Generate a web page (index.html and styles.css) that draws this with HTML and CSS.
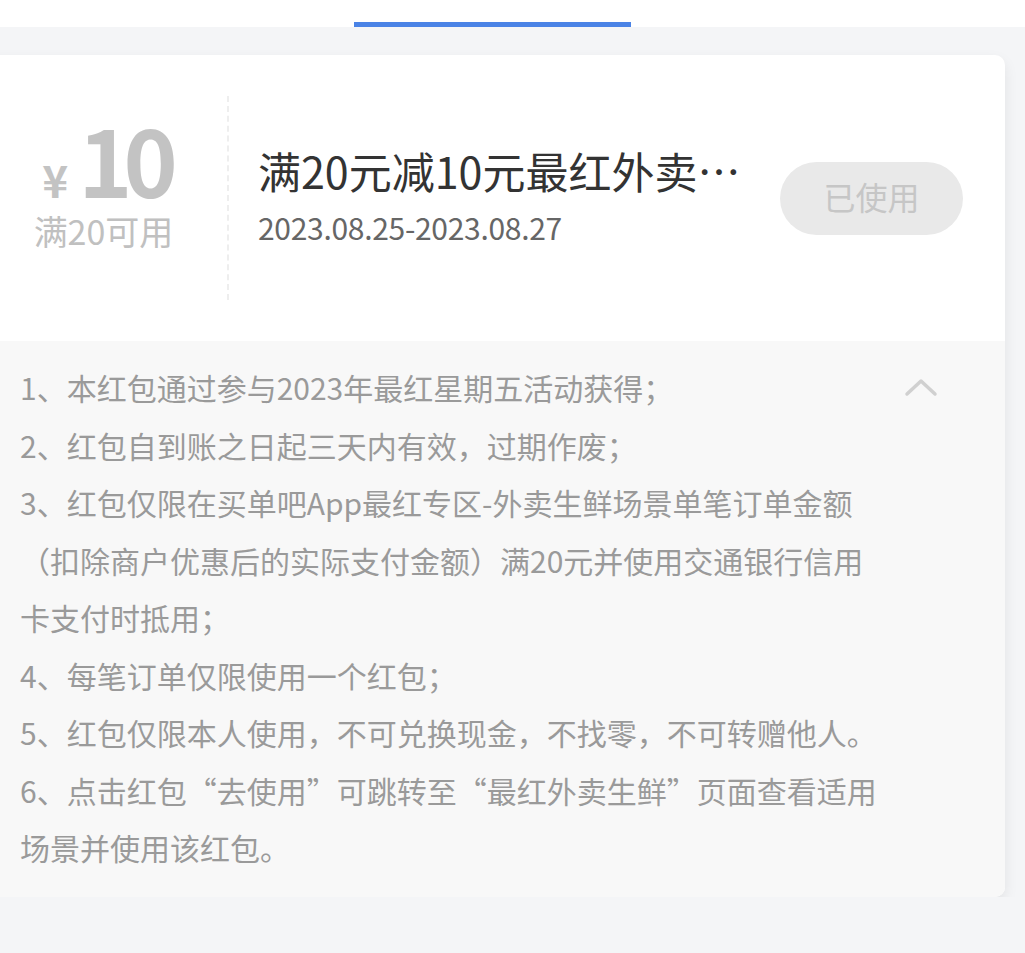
FILE: index.html
```html
<!DOCTYPE html>
<html lang="zh-CN">
<head>
  <meta charset="UTF-8" />
  <title>红包详情</title>
  <link rel="stylesheet" href="styles.css">
</head>
<body>

  <div class="tabbar">
    <div class="tab-line"></div>
  </div>

  <div class="page">
    <div class="coupon">
      <div class="coupon-top">
        <div class="amount">
          <div class="amount-num"><span class="yen">¥</span><span class="num">10</span></div>
          <div class="amount-cond">满20可用</div>
        </div>
        <div class="divider"></div>
        <div class="info">
          <div class="title">满20元减10元最红外卖生鲜红包</div>
          <div class="date">2023.08.25-2023.08.27</div>
        </div>
        <div class="btn-used">已使用</div>
      </div>

      <div class="rules">
        <div class="rules-text">
          <p>1、本红包通过参与2023年最红星期五活动获得；</p>
          <p>2、红包自到账之日起三天内有效，过期作废；</p>
          <p>3、红包仅限在买单吧App最红专区-外卖生鲜场景单笔订单金额（扣除商户优惠后的实际支付金额）满20元并使用交通银行信用卡支付时抵用；</p>
          <p>4、每笔订单仅限使用一个红包；</p>
          <p>5、红包仅限本人使用，不可兑换现金，不找零，不可转赠他人。</p>
          <p>6、点击红包“去使用”可跳转至“最红外卖生鲜”页面查看适用场景并使用该红包。</p>
        </div>
        <svg class="arrow" width="34" height="20" viewBox="0 0 34 20">
          <polyline points="3,17 17,4 31,17" fill="none" stroke="#d0d0d0" stroke-width="3.5" stroke-linecap="round" stroke-linejoin="round" />
        </svg>
      </div>
    </div>
  </div>

</body>
</html>
```

FILE: styles.css
```css
body {
  margin: 0;
  background-color: #f4f5f7;
  font-family: "Noto Sans CJK SC", "Noto Sans", sans-serif;
  overflow: hidden;
}
.tabbar {
  height: 27px;
  background-color: #fff;
  position: relative;
}
.tab-line {
  position: absolute;
  left: 354px;
  bottom: 0;
  width: 277px;
  height: 5px;
  background-color: #4a83e6;
}
.page {
  padding-top: 28px;
}
.coupon {
  margin-left: -20px;
  width: 1025px;
  border-radius: 10px;
  overflow: hidden;
  background-color: #fff;
  box-shadow: 0 6px 14px rgba(0, 0, 0, 0.08);
}
.coupon-top {
  height: 286px;
  display: flex;
  align-items: center;
}
.amount {
  width: 247px;
  box-sizing: border-box;
  padding-left: 4px;
  text-align: center;
  color: #c3c3c3;
  margin-top: -27px;
}
.amount-num {
  font-weight: bold;
  line-height: 84px;
  height: 84px;
}
.yen {
  font-size: 44px;
  margin-right: 10px;
}
.num {
  font-size: 92px;
  letter-spacing: -9px;
}
.amount-cond {
  font-size: 34px;
  line-height: 44px;
  color: #c0c0c0;
  margin-top: 9px;
  margin-left: -4px;
}
.divider {
  width: 0;
  height: 204px;
  border-left: 2px dashed #eeeeee;
}
.info {
  flex: 1;
  min-width: 0;
  padding-left: 29px;
  padding-right: 30px;
  margin-top: -8px;
}
.title {
  font-size: 43px;
  line-height: 56px;
  color: #333;
  white-space: nowrap;
  overflow: hidden;
  text-overflow: ellipsis;
}
.date {
  font-size: 30px;
  line-height: 40px;
  color: #666;
  margin-top: 9px;
  letter-spacing: -0.3px;
}
.btn-used {
  width: 183px;
  height: 73px;
  box-sizing: border-box;
  padding-bottom: 5px;
  border-radius: 37px;
  background-color: #e9e9e9;
  color: #c6c6c6;
  font-size: 32px;
  line-height: 68px;
  text-align: center;
  margin-right: 42px;
}
.rules {
  background-color: #f8f8f8;
  padding: 18px 0 20px 40px;
  position: relative;
}
.rules-text {
  width: 864px;
  color: #9a9a9a;
  font-size: 30px;
  line-height: 57.5px;
}
.rules-text p {
  margin: 0;
}
.arrow {
  position: absolute;
  left: 924px;
  top: 36px;
}
```
